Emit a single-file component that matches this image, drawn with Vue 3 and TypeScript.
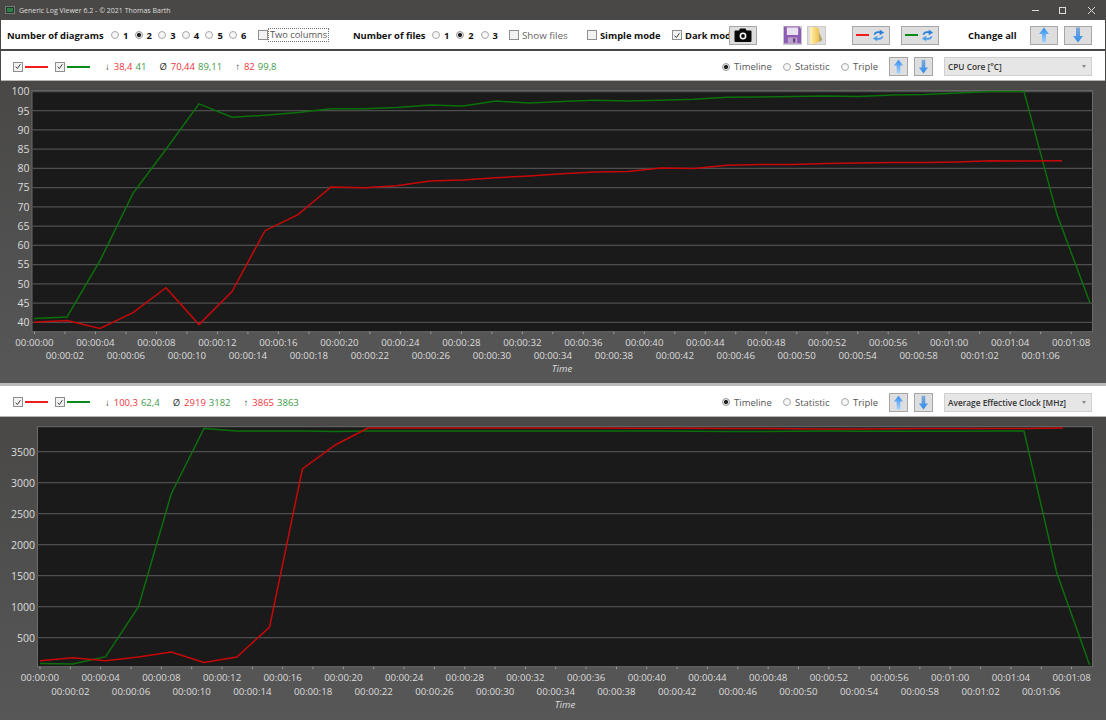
<script setup lang="ts">
import { computed } from 'vue'

interface Stat { sym: string; red: string; green: string }
interface Chart {
  key: string
  height: number
  top: number
  plot: { l: number; r: number; t: number; b: number }
  gridY: { label: string; y: number }[]
  tickStart: number
  tickStep: number
  labelY: [number, number]
  timeX: number
  timeY: number
  red: string
  green: string
  stats: Stat[]
  combo: string
}

const diagramCounts = [1, 2, 3, 4, 5, 6]
const fileCounts = [1, 2, 3]
const modes = ['Timeline', 'Statistic', 'Triple']

function pts(xs: number, step: number, ys: number[], last?: number): string {
  return ys
    .map((y, i) => {
      const x = last !== undefined && i === ys.length - 1 ? last : xs + step * i
      return `${x.toFixed(1)},${y.toFixed(1)}`
    })
    .join(' ')
}

const y1 = (v: number) => 322.3 - (v - 40) * 3.847
const y2 = (v: number) => 637.7 - (v - 500) * 0.062

const red1 = [40, 40.5, 38.4, 42.5, 49, 39.4, 48, 63.8, 68, 75.2, 75, 75.5, 76.7, 77, 77.6, 78, 78.6, 79.1, 79.2, 80.1, 80, 80.8, 81, 81, 81.3, 81.4, 81.5, 81.5, 81.7, 82, 81.9, 82]
const green1 = [41, 41.4, 56, 73.5, 85, 96.8, 93.3, 93.8, 94.5, 95.5, 95.5, 95.8, 96.5, 96.2, 97.5, 97, 97.4, 97.7, 97.5, 97.7, 98, 98.5, 98.6, 98.7, 98.8, 98.7, 99.1, 99.2, 99.6, 100, 100, 68, 45]

const red2Y = [660.7, 657.7, 660.7, 657, 652, 662.5, 657, 627, 469, 445, 428, 428, 428, 428, 428, 428, 428, 428, 428.2, 428.2, 428.2, 428.4, 428.6, 428.8, 429, 429, 428.8, 428.6, 428.6, 428.6, 428.4, 428]
const green2Y = [663.5, 664, 656.7, 607, 494, 428.5, 431, 431, 431, 431.4, 431, 431, 431, 431, 431, 431, 431, 431, 431, 431, 431.2, 431.4, 431.4, 431.2, 431, 431.2, 431.2, 431.2, 431.2, 431, 431, 573, 665]

const charts: Chart[] = [
  {
    key: 'a',
    height: 302,
    top: 81,
    plot: { l: 32, r: 1092.5, t: 90.5, b: 331.7 },
    gridY: Array.from({ length: 13 }, (_, i) => ({ label: String(100 - i * 5), y: y1(100 - i * 5) })),
    tickStart: 34.5,
    tickStep: 30.49,
    labelY: [342, 355],
    timeX: 562,
    timeY: 368,
    red: pts(34, 33, red1.map(y1), 1062),
    green: pts(34, 33, green1.map(y1)),
    stats: [
      { sym: '↓', red: '38,4', green: '41' },
      { sym: 'Ø', red: '70,44', green: '89,11' },
      { sym: '↑', red: '82', green: '99,8' },
    ],
    combo: 'CPU Core [°C]',
  },
  {
    key: 'b',
    height: 303,
    top: 417,
    plot: { l: 37.5, r: 1092.5, t: 426.7, b: 666.7 },
    gridY: [3500, 3000, 2500, 2000, 1500, 1000, 500].map((v) => ({ label: String(v), y: y2(v) })),
    tickStart: 40,
    tickStep: 30.34,
    labelY: [677.5, 691],
    timeX: 565,
    timeY: 704,
    red: pts(40, 32.8, red2Y, 1063),
    green: pts(40, 32.8, green2Y),
    stats: [
      { sym: '↓', red: '100,3', green: '62,4' },
      { sym: 'Ø', red: '2919', green: '3182' },
      { sym: '↑', red: '3865', green: '3863' },
    ],
    combo: 'Average Effective Clock [MHz]',
  },
]

function stamp(i: number): string {
  const s = i * 2
  const mm = String(Math.floor(s / 60)).padStart(2, '0')
  const ss = String(s % 60).padStart(2, '0')
  return `00:${mm}:${ss}`
}

const ticks = computed(() => Array.from({ length: 35 }, (_, i) => i))
</script>

<template>
  <div class="window">
    <svg class="defs" width="0" height="0" aria-hidden="true">
      <defs>
        <linearGradient id="blueUp" x1="0" y1="0" x2="0" y2="1">
          <stop offset="0" stop-color="#2f8df0" />
          <stop offset="1" stop-color="#a9d4fb" />
        </linearGradient>
        <linearGradient id="blueDown" x1="0" y1="0" x2="0" y2="1">
          <stop offset="0" stop-color="#7fa9d8" />
          <stop offset="1" stop-color="#2f8df0" />
        </linearGradient>
        <linearGradient id="folderFill" x1="0" y1="0" x2="1" y2="0">
          <stop offset="0" stop-color="#fff3b8" />
          <stop offset="1" stop-color="#efc14c" />
        </linearGradient>
      </defs>
      <symbol id="arrowUp" viewBox="0 0 12 16">
        <path d="M6 .5 11 7H8v8.500H4V7H1z" fill="url(#blueUp)" />
      </symbol>
      <symbol id="arrowDown" viewBox="0 0 12 16">
        <path d="M6 15.500 11 9H8V.5H4V9H1z" fill="url(#blueDown)" />
      </symbol>
      <symbol id="sync" viewBox="0 0 16 16">
        <path d="M2 7C2.500 3.500 6 1.800 9.500 3V.8L15 4.200 9.500 7.600V5.200C7 4.500 5 5.300 4 7z" fill="#2a7fd8" />
        <path d="M14 9C13.500 12.500 10 14.200 6.500 13V15.200L1 11.800 6.500 8.400V10.800C9 11.500 11 10.700 12 9z" fill="#4a9cec" />
      </symbol>
      <symbol id="tick" viewBox="0 0 10 10">
        <path d="M2 5.200 4.200 7.500 8 2.200" fill="none" stroke="#333" stroke-width="1.200" />
      </symbol>
    </svg>

    <header class="titlebar">
      <svg class="appicon" width="10" height="8" viewBox="0 0 10 8">
        <rect width="10" height="8" fill="#777" />
        <rect x="1" y="1" width="8" height="6" fill="#1e3a24" />
        <rect x="2" y="2" width="6" height="4" fill="#2f7d46" />
      </svg>
      <span class="title">Generic Log Viewer 6.2 - © 2021 Thomas Barth</span>
      <div class="winctrls">
        <svg width="74" height="10" viewBox="0 0 74 10" fill="none" stroke="#dcdcdc" stroke-width="1">
          <path d="M0 5.500H7" />
          <rect x="27.500" y="2.500" width="6" height="6" />
          <path d="M56 2 63 9M63 2 56 9" />
        </svg>
      </div>
    </header>

    <section class="toolbar">
      <span class="strong lbl-diagrams">Number of diagrams</span>
      <label v-for="n in diagramCounts" :key="n" class="radio strong w-diagram">
        <i class="dot" :class="{ on: n === 2 }"></i>{{ n }}
      </label>
      <label class="check two-columns">
        <i class="box"></i><span class="focused">Two columns</span>
      </label>
      <span class="strong lbl-files">Number of files</span>
      <label v-for="n in fileCounts" :key="'f' + n" class="radio strong w-file">
        <i class="dot" :class="{ on: n === 2 }"></i>{{ n }}
      </label>
      <label class="check show-files"><i class="box"></i>Show files</label>
      <label class="check strong simple"><i class="box"></i>Simple mode</label>
      <label class="check strong dark">
        <i class="box"><svg width="9" height="9"><use href="#tick" /></svg></i>Dark mode
      </label>

      <button class="btn camera" type="button" aria-label="Screenshot">
        <svg width="18" height="14" viewBox="0 0 18 14">
          <path d="M1.500 2.500H5L6 .5h5.500l1 2h4A1 1 0 0 1 17.500 3.500V13a1 1 0 0 1-1 1h-15a1 1 0 0 1-1-1V3.500a1 1 0 0 1 1-1z" fill="#0a0a0a" />
          <circle cx="9" cy="8" r="3.400" fill="#fff" />
          <circle cx="9" cy="8" r="1.900" fill="#0a0a0a" />
        </svg>
      </button>
      <button class="btn save" type="button" aria-label="Save">
        <svg width="18" height="18" viewBox="0 0 18 18">
          <path d="M0 0H16L18 2V18H0z" fill="#8d5cb3" />
          <rect x="3" y="1" width="12" height="8" fill="#e9e3f0" />
          <rect x="4" y="11.500" width="10" height="6.500" fill="#b9a3cb" />
          <rect x="9.500" y="12.500" width="2.500" height="4.500" fill="#6a4389" />
        </svg>
      </button>
      <button class="btn folder" type="button" aria-label="Open">
        <svg width="14" height="17" viewBox="0 0 14 17">
          <path d="M1 0H7L10 2V15L4 17H1z" fill="url(#folderFill)" />
          <path d="M10 5 13.500 13 10 15z" fill="#b5a777" />
        </svg>
      </button>
      <button class="btn swap red-swap" type="button" aria-label="Swap red">
        <i class="dash red"></i><svg width="13" height="13"><use href="#sync" /></svg>
      </button>
      <button class="btn swap green-swap" type="button" aria-label="Swap green">
        <i class="dash green"></i><svg width="13" height="13"><use href="#sync" /></svg>
      </button>
      <span class="strong change-all">Change all</span>
      <button class="btn wide up-all" type="button" aria-label="All up">
        <svg width="12" height="16"><use href="#arrowUp" /></svg>
      </button>
      <button class="btn wide down-all" type="button" aria-label="All down">
        <svg width="12" height="16"><use href="#arrowDown" /></svg>
      </button>
    </section>

    <template v-for="(c, idx) in charts" :key="c.key">
      <section class="subbar" :class="idx === 0 ? 'first' : 'second'">
        <i class="box"><svg width="9" height="9"><use href="#tick" /></svg></i>
        <i class="legend red"></i>
        <i class="box box2"><svg width="9" height="9"><use href="#tick" /></svg></i>
        <i class="legend green"></i>
        <div class="stats">
          <span v-for="s in c.stats" :key="s.sym" class="stat">
            <span class="sym">{{ s.sym }}</span>
            <span class="vred">{{ s.red }}</span>
            <span class="vgreen">{{ s.green }}</span>
          </span>
        </div>
        <div class="right">
          <label
            v-for="(m, i) in modes"
            :key="m"
            class="radio mode"
            :class="'mode' + i"
          ><i class="dot" :class="{ on: i === 0 }"></i>{{ m }}</label>
          <button class="btn small" type="button" aria-label="Up">
            <svg width="11" height="15"><use href="#arrowUp" /></svg>
          </button>
          <button class="btn small" type="button" aria-label="Down">
            <svg width="11" height="15"><use href="#arrowDown" /></svg>
          </button>
          <div class="combo"><span>{{ c.combo }}</span><i class="caret"></i></div>
        </div>
      </section>

      <div class="chart" :style="{ height: c.height + 'px' }">
        <svg
          width="1106"
          :height="c.height"
          :viewBox="`0 ${c.top} 1106 ${c.height}`"
        >
          <rect
            :x="c.plot.l"
            :y="c.plot.t"
            :width="c.plot.r - c.plot.l"
            :height="c.plot.b - c.plot.t"
            fill="#1a1a1a"
            stroke="#6b6b6b"
            stroke-width="1"
          />
          <g v-for="g in c.gridY" :key="g.label">
            <line :x1="c.plot.l" :x2="c.plot.r" :y1="g.y" :y2="g.y" stroke="#4f4f4f" stroke-width="1.300" />
            <text class="ylab" :x="c.plot.l - 2.500" :y="g.y + 3.800" text-anchor="end">{{ g.label }}</text>
          </g>
          <g v-for="i in ticks" :key="i">
            <line
              :x1="c.tickStart + c.tickStep * i"
              :x2="c.tickStart + c.tickStep * i"
              :y1="c.plot.b"
              :y2="c.plot.b + 2.500"
              stroke="#9a9a9a"
              stroke-width="1"
            />
            <text
              class="xlab"
              :x="c.tickStart + c.tickStep * i"
              :y="c.labelY[i % 2] + 3.500"
              text-anchor="middle"
            >{{ stamp(i) }}</text>
          </g>
          <polyline :points="c.green" fill="none" stroke="#0b700b" stroke-width="1.500" />
          <polyline :points="c.red" fill="none" stroke="#c80808" stroke-width="1.500" />
          <text class="timelab" :x="c.timeX" :y="c.timeY + 3.500" text-anchor="middle">Time</text>
        </svg>
      </div>
    </template>
  </div>
</template>

<style>
html,
body {
  margin: 0;
  background: #4a4846;
}
</style>

<style scoped>
.window {
  width: 1106px;
  height: 720px;
  overflow: hidden;
  font-family: "Open Sans", "Liberation Sans", sans-serif;
  font-size: 10px;
  color: #555;
  background: #4a4846;
}
.defs {
  position: absolute;
}
.titlebar {
  height: 20px;
  display: flex;
  align-items: center;
  padding-left: 5px;
  color: #dedede;
  background: #4a4846;
}
.appicon {
  margin-right: 4px;
}
.title {
  font-size: 7px;
}
.winctrls {
  margin-left: auto;
  display: flex;
}
.toolbar {
  box-sizing: border-box;
  height: 29px;
  margin: 0 1px 2px;
  padding-top: 1px;
  display: flex;
  align-items: center;
  background: #fff;
  white-space: nowrap;
}
.strong {
  font-weight: 700;
  color: #111;
  font-size: 9.400px;
}
.lbl-diagrams {
  margin-left: 6px;
  width: 104px;
}
.radio {
  display: flex;
  align-items: center;
}
.w-diagram {
  width: 23.600px;
}
.w-file {
  width: 24.300px;
}
.dot {
  display: block;
  box-sizing: border-box;
  flex: none;
  width: 8px;
  height: 8px;
  margin-right: 4px;
  border: 1px solid #a8a8a8;
  border-radius: 50%;
  background: #f6f6f6;
}
.dot.on {
  background: radial-gradient(circle, #222 0 1.800px, #e8e8e8 2.300px);
  border-color: #999;
}
.check {
  display: flex;
  align-items: center;
}
.box {
  display: flex;
  align-items: center;
  justify-content: center;
  box-sizing: border-box;
  flex: none;
  width: 10px;
  height: 10px;
  margin-right: 3px;
  border: 1px solid #8e8e8e;
  background: #f2f2f2;
}
.two-columns {
  margin-left: 5.400px;
  width: 95px;
  font-size: 9.300px;
}
.two-columns .box {
  margin-right: 1px;
}
.focused {
  outline: 1px dotted #777;
  padding: 0 1px;
  line-height: 12px;
}
.lbl-files {
  width: 79px;
}
.show-files {
  margin-left: 4.100px;
  width: 78px;
  font-size: 9.800px;
  color: #666;
}
.simple {
  width: 85px;
}
.dark {
  width: 57px;
  overflow: hidden;
}
.btn {
  display: flex;
  align-items: center;
  justify-content: center;
  box-sizing: border-box;
  padding: 0;
  height: 19px;
  border: 1px solid #a6a6a6;
  background: #dedede;
}
.camera {
  width: 28px;
}
.save {
  margin-left: 26px;
  width: 19px;
  border-color: #c9c9c9;
}
.folder {
  margin-left: 5px;
  width: 19px;
  border-color: #c9c9c9;
}
.swap {
  width: 38px;
  gap: 3px;
}
.red-swap {
  margin-left: 26px;
}
.green-swap {
  margin-left: 11px;
}
.dash {
  display: block;
  width: 13px;
  height: 2px;
}
.red {
  background: #f21c1c;
}
.green {
  background: #0a8a1a;
}
.change-all {
  margin-left: 29px;
  width: 62px;
}
.wide {
  width: 28px;
}
.down-all {
  margin-left: 6px;
}
.subbar {
  margin: 0 1px;
  display: flex;
  align-items: center;
  padding-left: 12px;
  padding-top: 1px;
  box-sizing: border-box;
  background: #fff;
  white-space: nowrap;
  box-shadow: inset 0 -1px 0 #b4b4b4;
}
.first {
  height: 30px;
}
.second {
  height: 34px;
  margin: 0;
  padding-left: 13px;
  padding-right: 1px;
  border-top: 3px solid #b9b9b9;
  background-clip: padding-box;
}
.subbar .box {
  margin-right: 2px;
}
.legend {
  display: block;
  width: 23px;
  height: 2px;
}
.box2 {
  margin-left: 7px;
}
.stats {
  margin-left: 15px;
  display: flex;
  gap: 13px;
  font-size: 9.500px;
}
.stat {
  display: flex;
  gap: 3px;
}
.sym {
  color: #333;
  margin-right: 1px;
}
.vred {
  color: #f0323c;
}
.vgreen {
  color: #3d9a4a;
}
.right {
  margin-left: auto;
  display: flex;
  align-items: center;
  padding-right: 13px;
  font-size: 9.500px;
}
.mode {
  color: #555;
}
.mode0 {
  width: 61px;
}
.mode1 {
  width: 58px;
}
.mode2 {
  width: 48px;
}
.small {
  width: 19px;
  margin-right: 5.500px;
}
.combo {
  margin-left: 6px;
  box-sizing: border-box;
  width: 148px;
  height: 19px;
  display: flex;
  align-items: center;
  justify-content: space-between;
  padding: 0 4px 0 3px;
  border: 1px solid #d0d0d0;
  background: #e6e6e6;
  color: #333;
  font-size: 8.300px;
  font-weight: 600;
}
.caret {
  width: 0;
  height: 0;
  margin-right: 1px;
  border-left: 2.500px solid transparent;
  border-right: 2.500px solid transparent;
  border-top: 3px solid #8a8a8a;
}
.chart {
  background: linear-gradient(#494847, #575757);
}
.chart svg {
  display: block;
}
.ylab,
.xlab,
.timelab {
  font-family: "Open Sans", "Liberation Sans", sans-serif;
  fill: #dcdcdc;
}
.ylab {
  font-size: 10.500px;
}
.xlab {
  font-size: 9.700px;
}
.timelab {
  font-size: 9.700px;
  font-style: italic;
}
</style>
